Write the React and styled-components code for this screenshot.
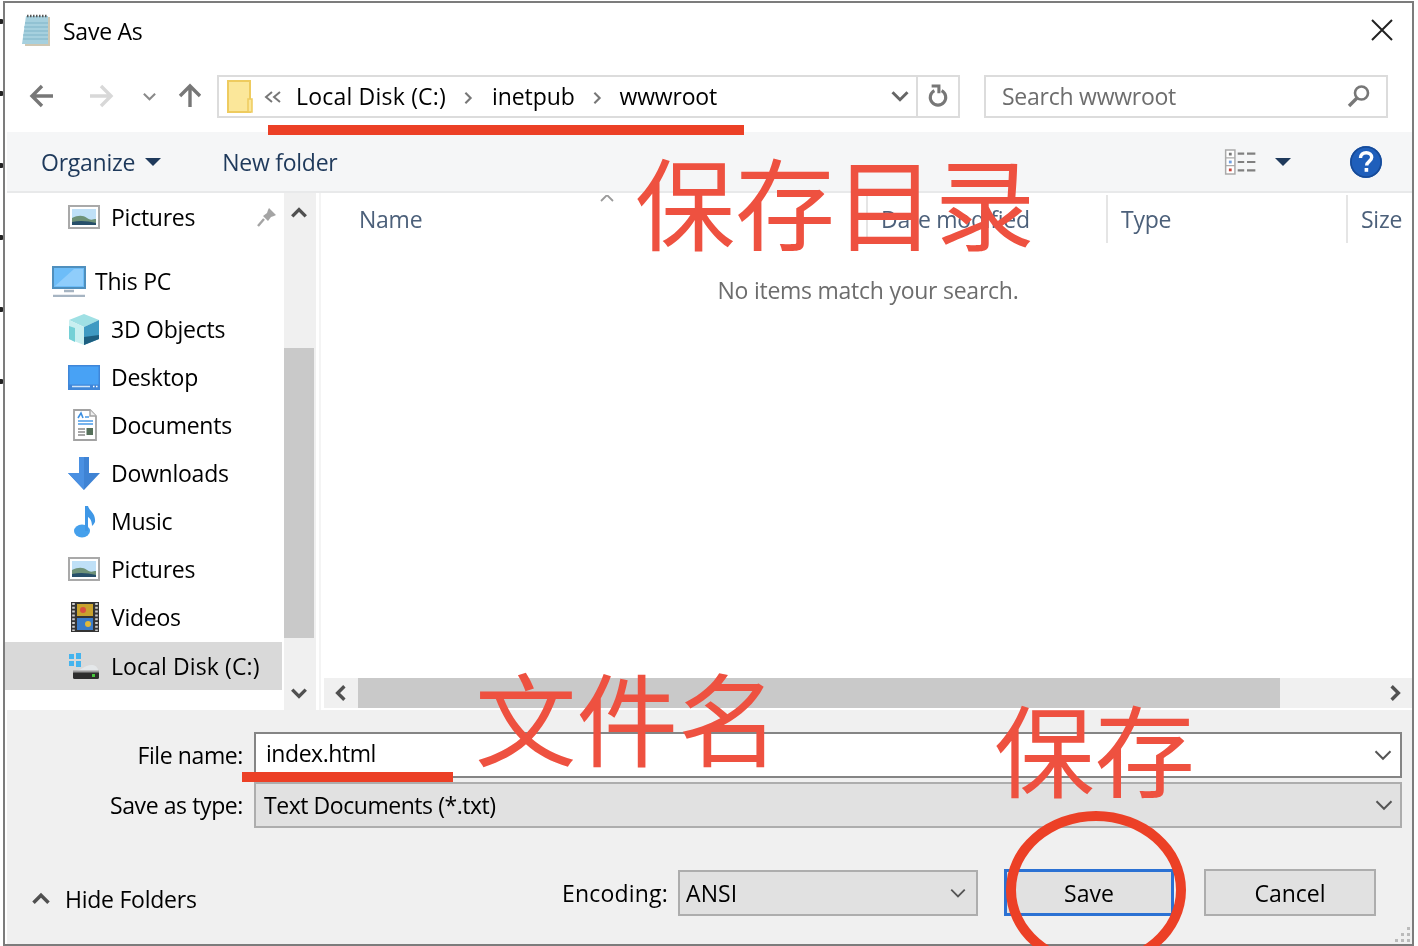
import React from "react";
import styled, { createGlobalStyle } from "styled-components";

const Global = createGlobalStyle`
  html, body { margin: 0; padding: 0; background: #fff; }
  * { box-sizing: border-box; }
  body { font-family: "Open Sans", "Noto Sans", "Liberation Sans", sans-serif; }
`;

const Page = styled.div`
  position: relative;
  width: 1418px;
  height: 946px;
  overflow: hidden;
  background: #fff;
  padding: 1px 0 0 3px;
  font-size: 23px;
  letter-spacing: -0.25px;
  color: #000;
`;
const Dialog = styled.div`
  width: 1411px;
  height: 945px;
  border: 2px solid #7c7c7c;
  display: flex;
  flex-direction: column;
  background: #fff;
  filter: blur(0.3px);
`;
const HandleDot = styled.i`
  position: absolute;
  left: 0;
  width: 4px;
  height: 5px;
  border-radius: 0 3px 3px 0;
  background: #222;
`;

const TitleBar = styled.div`
  height: 59px;
  flex: none;
  display: flex;
  align-items: center;
  padding: 0 18px 5px 14px;
`;
const TitleText = styled.span`
  margin-left: 12px;
  padding-top: 2px;
  flex: 1;
`;
const AddressRow = styled.div`
  height: 70px;
  flex: none;
  display: flex;
  align-items: center;
  padding-bottom: 2px;
`;
const NavButtons = styled.div`
  width: 212px;
  flex: none;
  display: flex;
  align-items: center;
  padding-left: 24px;
  gap: 33px;
  & > svg:nth-child(3) { margin-left: -5px; }
  & > svg:nth-child(4) { margin-left: -13px; }
`;
const AddressBox = styled.div`
  width: 743px;
  height: 43px;
  border: 2px solid #dcdcdc;
  display: flex;
  align-items: center;
  padding-left: 8px;
`;
const Crumb = styled.span`
  margin-left: ${(p) => p.$gap}px;
  white-space: nowrap;
  letter-spacing: ${(p) => p.$track || 0}px;
`;
const BoxEnd = styled.div`
  margin-left: auto;
  display: flex;
  align-items: center;
  height: 100%;
`;
const DropCell = styled.div`
  width: 40px;
  height: 100%;
  display: flex;
  align-items: center;
  justify-content: flex-end;
  padding-right: 6px;
  border-right: 2px solid #dcdcdc;
`;
const RefreshCell = styled.div`
  width: 40px;
  display: flex;
  justify-content: center;
`;
const SearchBox = styled.div`
  width: 404px;
  height: 43px;
  margin-left: 24px;
  border: 2px solid #dcdcdc;
  display: flex;
  align-items: center;
  justify-content: space-between;
  padding: 0 15px 0 16px;
  color: #6d6d6d;
`;
const Toolbar = styled.div`
  height: 61px;
  flex: none;
  margin-left: 2px;
  background: #f5f6f7;
  border-bottom: 2px solid #e8e9ea;
  display: flex;
  align-items: center;
  padding: 0 29px 0 34px;
  color: #1e395b;
`;
const ToolItem = styled.span`
  display: flex;
  align-items: center;
  gap: 10px;
  margin-right: 61px;
`;
const ToolEnd = styled.div`
  margin-left: auto;
  display: flex;
  align-items: center;
`;
const ToolGap = styled.span`
  width: ${(p) => p.$w}px;
`;
const Main = styled.div`
  height: 517px;
  flex: none;
  display: flex;
`;
const NavPane = styled.div`
  width: 279px;
  flex: none;
`;
const NavRow = styled.div`
  height: 48px;
  display: flex;
  align-items: center;
  padding-left: ${(p) => p.$indent}px;
  background: ${(p) => (p.$selected ? "#d9d9d9" : "transparent")};
  margin-right: 2px;
  white-space: nowrap;
`;
const NavIcon = styled.span`
  width: ${(p) => p.$w}px;
  flex: none;
  display: flex;
`;
const Pin = styled.span`
  margin-left: auto;
  margin-right: 4px;
  display: flex;
`;
const NavGap = styled.div`
  height: 16px;
`;
const SelectedRow = styled(NavRow)`
  margin-top: 1px;
`;
const VScroll = styled.div`
  width: 32px;
  flex: none;
  background: #f0f0f0;
  display: flex;
  flex-direction: column;
`;
const VTop = styled.div`
  height: 155px;
  display: flex;
  justify-content: center;
  padding: 11px 2px 0 0;
`;
const VThumb = styled.div`
  width: 30px;
  height: 290px;
  background: #c9c9c9;
`;
const VBottom = styled.div`
  flex: 1;
  display: flex;
  justify-content: center;
  padding: 46px 2px 0 0;
`;
const Split = styled.div`
  width: 8px;
  flex: none;
  background: #fff;
  display: flex;
  justify-content: center;
  &::before { content: ""; width: 2px; background: #f4f4f4; }
`;
const Content = styled.div`
  flex: 1;
  display: flex;
  flex-direction: column;
  min-width: 0;
`;
const Header = styled.div`
  height: 50px;
  flex: none;
  display: flex;
  color: #4c607a;
`;
const Column = styled.div`
  position: relative;
  width: ${(p) => p.$w}px;
  flex: ${(p) => (p.$w ? "none" : 1)};
  padding: 8px 0 0 ${(p) => p.$pad}px;
  border-right: ${(p) => (p.$sep ? "2px solid #e5e5e5" : "none")};
  margin-top: 2px;
  white-space: nowrap;
  overflow: hidden;
`;
const SortMark = styled.span`
  position: absolute;
  left: 275px;
  top: -5px;
  display: flex;
`;
const Empty = styled.div`
  flex: 1;
  text-align: center;
  padding-top: 31px;
  color: #6d6d6d;
`;
const HScroll = styled.div`
  height: 30px;
  flex: none;
  margin-bottom: 2px;
  background: #f0f0f0;
  display: flex;
  align-items: center;
`;
const HButton = styled.div`
  width: 34px;
  flex: none;
  display: flex;
  justify-content: center;
`;
const HThumb = styled.div`
  width: 922px;
  height: 100%;
  background: #c9c9c9;
`;
const HTrack = styled.div`
  flex: 1;
`;
const Bottom = styled.div`
  position: relative;
  flex: 1;
  margin-left: 2px;
  background: #f0f0f0;
  padding-top: 22px;
`;
const FieldRow = styled.div`
  display: flex;
  align-items: center;
  margin-bottom: 4px;
`;
const FieldLabel = styled.label`
  width: 236px;
  text-align: right;
  margin-right: 11px;
  padding-bottom: ${(p) => (p.$raised ? 1 : 0)}px;
  white-space: nowrap;
  letter-spacing: -0.4px;
`;
const Combo = styled.div`
  width: 1148px;
  height: 46px;
  display: flex;
  align-items: center;
  justify-content: space-between;
  padding: ${(p) => (p.$editable ? "0 7px 4px 10px" : "0 6px 0 8px")};
  background: ${(p) => (p.$editable ? "#fff" : "#e1e1e1")};
  border: 2px solid ${(p) => (p.$editable ? "#858585" : "#adadad")};
  white-space: nowrap;
  letter-spacing: -0.45px;
  & > svg { margin-top: ${(p) => (p.$editable ? 4 : 0)}px; }
`;
const Footer = styled.div`
  margin-top: 41px;
  display: flex;
  align-items: center;
  padding: 0 36px 0 24px;
`;
const HideFolders = styled.div`
  display: flex;
  align-items: center;
  gap: 14px;
  padding-top: 12px;
`;
const EncodingLabel = styled.span`
  margin-left: auto;
  margin-right: 10px;
  letter-spacing: 0.2px;
`;
const EncodingSelect = styled(Combo)`
  width: 300px;
  padding: 0 9px 0 6px;
  letter-spacing: 0.1px;
`;
const DialogButton = styled.button`
  width: ${(p) => p.$w}px;
  height: 47px;
  margin-left: ${(p) => p.$gap}px;
  padding: 0;
  font: inherit;
  color: #000;
  background: #e1e1e1;
  border: ${(p) => (p.$primary ? "3px solid #2b71d3" : "2px solid #adadad")};
`;
const Grip = styled.span`
  position: absolute;
  right: 1px;
  bottom: 1px;
  display: flex;
`;

const Note = styled.span`
  position: absolute;
  font-family: "Noto Sans CJK SC", sans-serif;
  color: #ee5140;
  white-space: nowrap;
  line-height: 1;
  letter-spacing: 0;
`;
const FolderNote = styled(Note)`
  left: 635px;
  top: 150px;
  font-size: 100px;
`;
const NameNote = styled(Note)`
  left: 475px;
  top: 664px;
  font-size: 101.5px;
`;
const SaveNote = styled(Note)`
  left: 994px;
  top: 696px;
  font-size: 100.5px;
`;
const Stroke = styled.div`
  position: absolute;
  height: 10px;
  background: #ec4026;
`;
const FolderStroke = styled(Stroke)`
  left: 268px;
  top: 125px;
  width: 476px;
`;
const NameStroke = styled(Stroke)`
  left: 242px;
  top: 772px;
  width: 211px;
`;
const SaveRing = styled.div`
  position: absolute;
  left: 1006px;
  top: 811px;
  width: 180px;
  height: 158px;
  border: 10px solid #ec4026;
  border-radius: 50%;
`;

const Chevron = ({ dir = "down", size = 16, color = "#555", sw = 2.4 }) => {
  const pts = {
    down: "2,5 8,11 14,5",
    up: "2,11 8,5 14,11",
    left: "11,2 5,8 11,14",
    right: "5,2 11,8 5,14",
  }[dir];
  return (
    <svg width={size} height={size} viewBox="0 0 16 16">
      <polyline points={pts} fill="none" stroke={color} strokeWidth={sw} />
    </svg>
  );
};

const Arrow = ({ rot, color, w = 26 }) => (
  <svg width={w} height={26} viewBox="0 0 26 26" style={{ transform: `rotate(${rot}deg)` }}>
    <path d="M24 13H3M13 3L3 13l10 10" fill="none" stroke={color} strokeWidth="3.4" />
  </svg>
);

const NotepadIcon = () => (
  <svg width="32" height="34" viewBox="0 0 32 34">
    <path d="M7 3h22v28H3z" fill="#a6d0de" />
    <path d="M29 4h2v29H6v-2h23z" fill="#cfc7b2" />
    <path d="M6 10h23M5 14h24M5 18h24M4 22h25M4 26h25" stroke="#7fb4c8" strokeWidth="1.2" />
    <path d="M8 3h21" stroke="#555" strokeWidth="2.5" strokeDasharray="1.5 1.5" />
  </svg>
);
const FolderIcon = () => (
  <svg width="26" height="33" viewBox="0 0 26 33">
    <path d="M1 1h22v31H1z" fill="#fbe79a" stroke="#eecb5f" strokeWidth="2" />
    <path d="M21 19h4v13h-4z" fill="#fbe79a" stroke="#eecb5f" strokeWidth="1.5" />
  </svg>
);
const RefreshIcon = () => (
  <svg width="20" height="24" viewBox="0 0 22 26">
    <path d="M7 7a8.500 8.500 0 1 0 8 0" fill="none" stroke="#777" strokeWidth="3.4" />
    <path d="M4 2h8v8" fill="none" stroke="#777" strokeWidth="3.400" />
  </svg>
);
const SearchIcon = () => (
  <svg width="24" height="24" viewBox="0 0 24 24">
    <circle cx="14.5" cy="9" r="6.5" fill="none" stroke="#777" strokeWidth="2.6" />
    <path d="M10 14l-8 8" stroke="#777" strokeWidth="3.4" />
  </svg>
);
const ViewIcon = () => (
  <svg width="33" height="26" viewBox="0 0 34 28">
    <path d="M1 1h10v26H1z" fill="#fff" stroke="#aaa" strokeWidth="1.6" />
    <path d="M1 9.5h10M1 18h10" stroke="#aaa" strokeWidth="1.4" />
    <rect x="4.5" y="4" width="3" height="3" fill="#777" />
    <rect x="4.5" y="12.5" width="3" height="3" fill="#6f9fe0" />
    <rect x="4.5" y="21" width="3" height="3" fill="#c9453c" />
    <path d="M14 5h7M24 5h9M14 14h7M24 14h9M14 23h7M24 23h9" stroke="#808080" strokeWidth="2.2" />
  </svg>
);
const HelpIcon = () => (
  <svg width="34" height="34" viewBox="0 0 34 34">
    <circle cx="17" cy="17" r="16" fill="#1f5fbb" />
    <circle cx="17" cy="17" r="15" fill="none" stroke="#174a96" strokeWidth="1.5" />
    <path d="M11.5 13c0-3.6 2.4-5.3 5.7-5.3 3.3 0 5.5 1.8 5.5 4.6 0 4.2-5 4-5 8.2" fill="none" stroke="#fff" strokeWidth="3.4" />
    <rect x="15.6" y="23" width="3.6" height="3.8" fill="#fff" />
  </svg>
);
const TriangleIcon = ({ w = 16, h = 8 }) => (
  <svg width={w} height={h} viewBox="0 0 16 8">
    <path d="M0 0h16L8 8z" fill="#1e395b" />
  </svg>
);
const PinIcon = () => (
  <svg width="22" height="22" viewBox="0 0 22 22">
    <path d="M13 2l7 7-2 1-3 1-3 4-5-5 4-3 1-3z" fill="#a4a4a4" />
    <path d="M8 13l-6 7" stroke="#a4a4a4" strokeWidth="2.4" />
  </svg>
);
const PicturesIcon = () => (
  <svg width="32" height="24" viewBox="0 0 32 24">
    <rect x="1" y="1" width="30" height="22" fill="#fff" stroke="#a9a9a9" strokeWidth="2" />
    <rect x="4" y="4" width="24" height="16" fill="#bfe0f7" />
    <path d="M4 13c6-3 11-3 15 0s6 1 9 1v6H4z" fill="#6f9278" />
    <path d="M4 17c8-2 16-1 24 1v2H4z" fill="#274f6a" />
  </svg>
);
const PcIcon = () => (
  <svg width="34" height="31" viewBox="0 0 34 31">
    <rect x="1" y="1" width="32" height="21" fill="#6dbdf8" stroke="#4f8fbd" strokeWidth="2" />
    <path d="M3 20L22 3h9v17z" fill="#8fcdfb" />
    <path d="M12 25h10M1 30h32" stroke="#a6b4c2" strokeWidth="2.6" />
  </svg>
);
const CubeIcon = () => (
  <svg width="32" height="33" viewBox="0 0 32 33">
    <path d="M16 1l15 6-15 7L1 7z" fill="#9fe0e4" />
    <path d="M1 7l15 7v18L1 26z" fill="#c8eff0" />
    <path d="M1 13l6 2v14l-6-3z" fill="#74d0d6" />
    <path d="M31 7l-15 7v18l15-6z" fill="#3f9ac2" />
    <path d="M16 24l15-2v4l-15 6z" fill="#1d5f80" />
  </svg>
);
const DesktopIcon = () => (
  <svg width="32" height="25" viewBox="0 0 32 25">
    <rect width="32" height="25" fill="#3f86d8" />
    <rect x="1.5" y="1.5" width="29" height="18" fill="#48a2f5" />
    <path d="M4 21.5h18" stroke="#cfe4f8" strokeWidth="1.5" />
    <path d="M25 21.5h1.5M28 21.5h1.5" stroke="#fff" strokeWidth="1.6" />
  </svg>
);
const DocumentIcon = () => (
  <svg width="24" height="32" viewBox="0 0 24 32">
    <path d="M1 1h16l6 6v24H1z" fill="#fff" stroke="#a2a2a2" strokeWidth="1.8" />
    <path d="M17 1v6h6" fill="#eee" stroke="#a2a2a2" strokeWidth="1.4" />
    <path d="M5 9l3-5 2 5" fill="none" stroke="#3d8fe0" strokeWidth="1.6" />
    <path d="M12 8h4M5 12h15M5 15h15" stroke="#4a9ae6" strokeWidth="1.4" />
    <path d="M5 20h7M5 23h7M5 26h7" stroke="#8a8a8a" strokeWidth="1.4" />
    <rect x="13.5" y="19" width="6.5" height="7" fill="#55705a" />
  </svg>
);
const DownloadIcon = () => (
  <svg width="32" height="33" viewBox="0 0 32 33">
    <path d="M11 0h10v16h11L16 33 0 16h11z" fill="#3f83d4" />
    <path d="M11 0h5v33L0 16h11z" fill="#4a90e2" />
  </svg>
);
const MusicIcon = () => (
  <svg width="24" height="33" viewBox="0 0 24 33">
    <ellipse cx="9" cy="26" rx="8" ry="6.5" fill="#45a0ec" />
    <path d="M12 1h3c1 5 8 7 7 16-1 2-2 3-3 4 0-5-2-8-4-9v14h-3z" fill="#3f97e6" />
  </svg>
);
const VideoIcon = () => (
  <svg width="28" height="30" viewBox="0 0 28 30">
    <rect width="28" height="30" fill="#333" />
    <path d="M2.5 1v28M25.500 1v28" stroke="#ccc" strokeWidth="2.6" strokeDasharray="2 1.8" />
    <rect x="6" y="2" width="16" height="12" fill="#c8a22d" />
    <rect x="6" y="16" width="16" height="12" fill="#3a7bc8" />
    <circle cx="12" cy="8" r="3" fill="#d8503f" />
    <circle cx="17" cy="22" r="3" fill="#e2b93a" />
  </svg>
);
const DiskIcon = () => (
  <svg width="32" height="26" viewBox="0 0 32 26">
    <path d="M1 1h5v5H1zM8 0h5v6H8zM1 8h5v5H1zM8 8h5v6H8z" fill="#45b4ee" />
    <path d="M5 19c8-1 12-8 20-7 4 1 5 4 6 7z" fill="#e4e7e9" />
    <rect x="5" y="18" width="26" height="8" rx="1.5" fill="#2d2d2d" />
    <rect x="5" y="17.500" width="26" height="2" fill="#9a9a9a" />
    <rect x="24" y="21" width="3" height="3" fill="#46c83c" />
  </svg>
);
const GripIcon = () => (
  <svg width="17" height="17" viewBox="0 0 17 17" fill="#bbb">
    <rect x="13" y="1" width="3" height="3" />
    <rect x="7" y="7" width="3" height="3" />
    <rect x="13" y="7" width="3" height="3" />
    <rect x="1" y="13" width="3" height="3" />
    <rect x="7" y="13" width="3" height="3" />
    <rect x="13" y="13" width="3" height="3" />
  </svg>
);

const places = [
  ["This PC", PcIcon, 47, 43],
  ["3D Objects", CubeIcon, 63, 43],
  ["Desktop", DesktopIcon, 63, 43],
  ["Documents", DocumentIcon, 68, 38],
  ["Downloads", DownloadIcon, 63, 43],
  ["Music", MusicIcon, 68, 38],
  ["Pictures", PicturesIcon, 63, 43],
  ["Videos", VideoIcon, 66, 40],
];

export default function App() {
  return (
    <Page>
      <Global />
      {[19, 91, 163, 235, 307, 379].map((y) => (
        <HandleDot key={y} style={{ top: y }} />
      ))}
      <Dialog>
        <TitleBar>
          <NotepadIcon />
          <TitleText>Save As</TitleText>
          <svg width="24" height="24" viewBox="0 0 24 24">
            <path d="M2 2l20 20M22 2L2 22" stroke="#222" strokeWidth="2" />
          </svg>
        </TitleBar>

        <AddressRow>
          <NavButtons>
            <Arrow rot={0} color="#777" />
            <Arrow rot={180} color="#d8d8d8" />
            <Chevron size={15} color="#8a8a8a" sw={2.2} />
            <Arrow rot={90} color="#777" />
          </NavButtons>
          <AddressBox>
            <FolderIcon />
            <Crumb $gap={11}>
              <svg width="18" height="16" viewBox="0 0 18 16">
                <path d="M8 3L2 8l6 5M16 3l-6 5 6 5" fill="none" stroke="#777" strokeWidth="2" />
              </svg>
            </Crumb>
            <Crumb $gap={14} $track={0.2}>Local Disk (C:)</Crumb>
            <Crumb $gap={15}><Chevron dir="right" size={14} color="#777" /></Crumb>
            <Crumb $gap={17} $track={-0.1}>inetpub</Crumb>
            <Crumb $gap={15}><Chevron dir="right" size={14} color="#777" /></Crumb>
            <Crumb $gap={16} $track={-0.2}>wwwroot</Crumb>
            <BoxEnd>
              <DropCell><Chevron size={20} color="#666" sw={2.4} /></DropCell>
              <RefreshCell><RefreshIcon /></RefreshCell>
            </BoxEnd>
          </AddressBox>
          <SearchBox>
            <span>Search wwwroot</span>
            <SearchIcon />
          </SearchBox>
        </AddressRow>

        <Toolbar>
          <ToolItem>Organize <TriangleIcon /></ToolItem>
          <ToolItem>New folder</ToolItem>
          <ToolEnd>
            <ViewIcon />
            <ToolGap $w={18} />
            <TriangleIcon />
            <ToolGap $w={58} />
            <HelpIcon />
          </ToolEnd>
        </Toolbar>

        <Main>
          <NavPane>
            <NavRow $indent={63}>
              <NavIcon $w={43}><PicturesIcon /></NavIcon>
              Pictures
              <Pin><PinIcon /></Pin>
            </NavRow>
            <NavGap />
            {places.map(([name, Icon, indent, w]) => (
              <NavRow key={name} $indent={indent}>
                <NavIcon $w={w}><Icon /></NavIcon>
                {name}
              </NavRow>
            ))}
            <SelectedRow $indent={63} $selected>
              <NavIcon $w={43}><DiskIcon /></NavIcon>
              <Crumb $gap={0} $track={0.1}>Local Disk (C:)</Crumb>
            </SelectedRow>
          </NavPane>
          <VScroll>
            <VTop><Chevron dir="up" size={18} color="#505050" sw={3} /></VTop>
            <VThumb />
            <VBottom><Chevron size={18} color="#505050" sw={3} /></VBottom>
          </VScroll>
          <Split />
          <Content>
            <Header>
              <Column $w={544} $pad={35} $sep>
                Name
                <SortMark><Chevron dir="up" size={16} color="#9a9a9a" sw={1.8} /></SortMark>
              </Column>
              <Column $w={240} $pad={13} $sep>Date modified</Column>
              <Column $w={240} $pad={13} $sep>Type</Column>
              <Column $pad={13}>Size</Column>
            </Header>
            <Empty>No items match your search.</Empty>
            <HScroll>
              <HButton><Chevron dir="left" size={18} color="#505050" sw={3} /></HButton>
              <HThumb />
              <HTrack />
              <HButton><Chevron dir="right" size={18} color="#505050" sw={3} /></HButton>
            </HScroll>
          </Content>
        </Main>

        <Bottom>
          <FieldRow>
            <FieldLabel $raised>File name:</FieldLabel>
            <Combo $editable>
              <span>index.html</span>
              <Chevron size={20} color="#555" sw={1.6} />
            </Combo>
          </FieldRow>
          <FieldRow>
            <FieldLabel>Save as type:</FieldLabel>
            <Combo>
              <span>Text Documents (*.txt)</span>
              <Chevron size={20} color="#555" sw={1.6} />
            </Combo>
          </FieldRow>
          <Footer>
            <HideFolders>
              <Chevron dir="up" size={20} color="#505050" sw={2.8} />
              Hide Folders
            </HideFolders>
            <EncodingLabel>Encoding:</EncodingLabel>
            <EncodingSelect>
              <span>ANSI</span>
              <Chevron size={18} color="#555" sw={1.6} />
            </EncodingSelect>
            <DialogButton $w={170} $gap={26} $primary>Save</DialogButton>
            <DialogButton $w={172} $gap={30}>Cancel</DialogButton>
          </Footer>
          <Grip><GripIcon /></Grip>
        </Bottom>
      </Dialog>

      <FolderNote>保存目录</FolderNote>
      <NameNote>文件名</NameNote>
      <SaveNote>保存</SaveNote>
      <FolderStroke />
      <NameStroke />
      <SaveRing />
    </Page>
  );
}
